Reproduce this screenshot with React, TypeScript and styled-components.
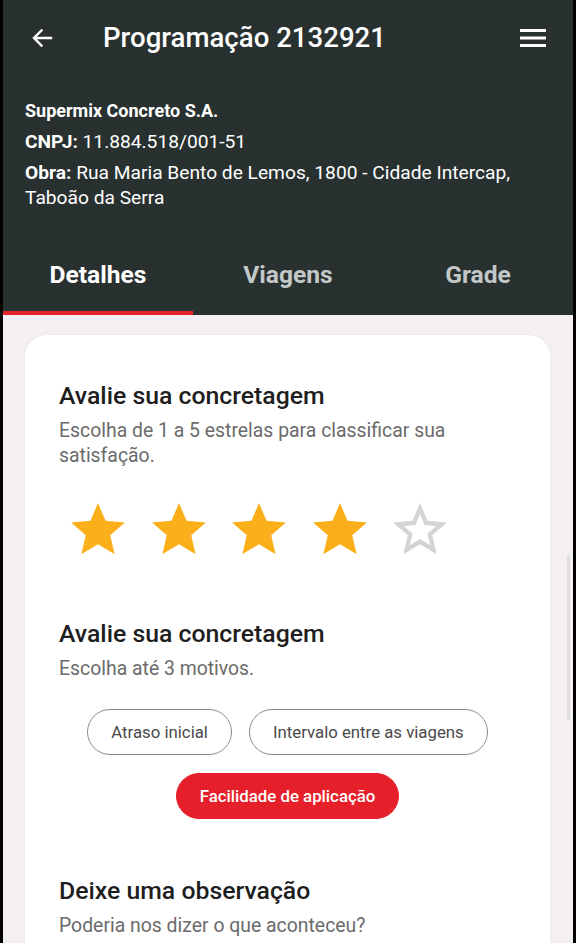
import React from "react";
import styled, { createGlobalStyle } from "styled-components";

const Global = createGlobalStyle`
  html, body { margin: 0; padding: 0; background: #000; }
  body { font-family: Roboto, "Noto Sans", "Liberation Sans", sans-serif; }
  * { box-sizing: border-box; }
`;

const Frame = styled.div`
  width: 576px;
  height: 943px;
  background: #000;
  padding: 0 3px;
  overflow: hidden;
`;

const Screen = styled.div`
  position: relative;
  height: 100%;
  background: #f3eff2;
  display: flex;
  flex-direction: column;
`;

const Header = styled.header`
  background: #283130;
  color: #fff;
  display: flex;
  flex-direction: column;
`;

const Toolbar = styled.div`
  height: 76px;
  display: flex;
  align-items: center;
  padding: 0 26px 0 27px;
`;

const IconBtn = styled.span`
  display: flex;
  align-items: center;
  justify-content: center;
  color: #fff;
`;

const Title = styled.h1`
  flex: 1;
  margin: 0 0 0 49px;
  font-size: 27.6px;
  font-weight: 500;
  line-height: 32px;
`;

const Info = styled.div`
  padding: 22px 22px 0;
  display: flex;
  flex-direction: column;
  gap: 6px;
`;

const InfoLine = styled.p<{ $strong?: boolean }>`
  margin: 0;
  font-size: ${(p) => (p.$strong ? "18px" : "19.2px")};
  line-height: 25px;
  font-weight: ${(p) => (p.$strong ? 700 : 400)};
  color: #fff;
  b { font-weight: 700; }
`;

const Tabs = styled.nav`
  display: grid;
  grid-template-columns: repeat(3, 1fr);
  margin-top: 26px;
`;

const Tab = styled.div<{ $active?: boolean }>`
  height: 79px;
  display: flex;
  align-items: center;
  justify-content: center;
  padding-top: 2px;
  font-size: 24.6px;
  font-weight: 700;
  color: ${(p) => (p.$active ? "#ffffff" : "#c3c8c8")};
  border-bottom: 4px solid ${(p) => (p.$active ? "#e5222c" : "transparent")};
`;

const Body = styled.main`
  flex: 1;
  padding: 20px 23px 0 22px;
  display: flex;
  flex-direction: column;
`;

const Card = styled.section`
  flex: 1;
  background: #fff;
  border-radius: 22px 22px 0 0;
  padding: 46px 34px 0;
  box-shadow: 0 0 4px rgba(0, 0, 0, 0.04);
`;

const Block = styled.div<{ $gap?: number }>`
  margin-top: ${(p) => p.$gap ?? 0}px;
`;

const Heading = styled.h2`
  margin: 0;
  font-size: 24.8px;
  line-height: 30px;
  font-weight: 500;
  color: #1e1e1e;
`;

const Sub = styled.p`
  margin: 7px 0 0;
  font-size: 19.4px;
  line-height: 25px;
  color: #6b6b6b;
`;

const Stars = styled.div`
  display: flex;
  gap: 26.5px;
  margin-top: 35px;
  padding-left: 12px;
`;

const Chips = styled.div`
  display: flex;
  flex-wrap: wrap;
  justify-content: center;
  column-gap: 17px;
  row-gap: 18px;
  margin-top: 28px;
`;

const Chip = styled.span<{ $selected?: boolean }>`
  height: 46px;
  padding: 0 23px;
  border-radius: 23px;
  display: inline-flex;
  align-items: center;
  font-size: 16.8px;
  font-weight: ${(p) => (p.$selected ? 500 : 400)};
  color: ${(p) => (p.$selected ? "#fff" : "#4a4a4a")};
  background: ${(p) => (p.$selected ? "#e6202a" : "#fff")};
  border: 1.5px solid ${(p) => (p.$selected ? "#e6202a" : "#8a8a8a")};
`;

const ScrollThumb = styled.div`
  position: absolute;
  right: 3px;
  top: 555px;
  width: 3px;
  height: 165px;
  border-radius: 2px;
  background: rgba(0, 0, 0, 0.08);
`;

const Star = ({ filled }: { filled: boolean }) =>
  filled ? (
    <svg width="54" height="52" viewBox="2 2 20 19.3">
      <path
        fill="#fbb01b"
        d="M12 17.27L18.18 21l-1.64-7.03L22 9.24l-7.19-.61L12 2 9.19 8.63 2 9.24l5.46 4.73L5.82 21z"
      />
    </svg>
  ) : (
    <svg width="54" height="52" viewBox="2 2 20 19.3">
      <path
        fill="#d4d4d4"
        d="M22 9.24l-7.19-.62L12 2 9.19 8.63 2 9.24l5.46 4.73L5.82 21 12 17.27 18.18 21l-1.63-7.03L22 9.24zM12 15.4l-3.76 2.27 1-4.28-3.32-2.88 4.38-.38L12 6.1l1.71 4.04 4.38.38-3.32 2.88 1 4.28L12 15.4z"
      />
    </svg>
  );

export default function App() {
  const rating = 4;
  return (
    <>
      <Global />
      <Frame>
        <Screen>
          <Header>
            <Toolbar>
              <IconBtn>
                <svg width="24" height="24" viewBox="0 0 24 24" fill="none" stroke="#fff" strokeWidth="2.4" strokeLinecap="square">
                  <path d="M21 12H4.5M11.5 4.5L4 12l7.5 7.5" />
                </svg>
              </IconBtn>
              <Title>Programação 2132921</Title>
              <IconBtn>
                <svg width="28" height="24" viewBox="0 0 28 24" fill="none" stroke="#fff" strokeWidth="3">
                  <path d="M1 4.5h26M1 12h26M1 19.5h26" />
                </svg>
              </IconBtn>
            </Toolbar>
            <Info>
              <InfoLine $strong>Supermix Concreto S.A.</InfoLine>
              <InfoLine>
                <b>CNPJ:</b> 11.884.518/001-51
              </InfoLine>
              <InfoLine>
                <b>Obra:</b> Rua Maria Bento de Lemos, 1800 - Cidade Intercap, Taboão da Serra
              </InfoLine>
            </Info>
            <Tabs>
              <Tab $active>Detalhes</Tab>
              <Tab>Viagens</Tab>
              <Tab>Grade</Tab>
            </Tabs>
          </Header>
          <Body>
            <Card>
              <Block>
                <Heading>Avalie sua concretagem</Heading>
                <Sub>Escolha de 1 a 5 estrelas para classificar sua satisfação.</Sub>
                <Stars>
                  {[1, 2, 3, 4, 5].map((n) => (
                    <Star key={n} filled={n <= rating} />
                  ))}
                </Stars>
              </Block>
              <Block $gap={64}>
                <Heading>Avalie sua concretagem</Heading>
                <Sub>Escolha até 3 motivos.</Sub>
                <Chips>
                  <Chip>Atraso inicial</Chip>
                  <Chip>Intervalo entre as viagens</Chip>
                  <Chip $selected>Facilidade de aplicação</Chip>
                </Chips>
              </Block>
              <Block $gap={57}>
                <Heading>Deixe uma observação</Heading>
                <Sub>Poderia nos dizer o que aconteceu?</Sub>
              </Block>
            </Card>
          </Body>
          <ScrollThumb />
        </Screen>
      </Frame>
    </>
  );
}
